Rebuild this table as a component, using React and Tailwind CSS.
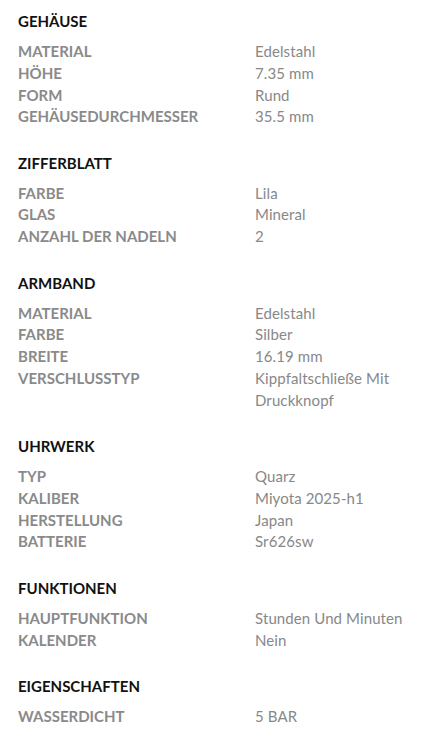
import React from 'react';

// Technische Daten der Uhr
const sections = [
  {
    title: 'GEHÄUSE',
    rows: [
      ['MATERIAL', 'Edelstahl'],
      ['HÖHE', '7.35 mm'],
      ['FORM', 'Rund'],
      ['GEHÄUSEDURCHMESSER', '35.5 mm'],
    ],
  },
  {
    title: 'ZIFFERBLATT',
    rows: [
      ['FARBE', 'Lila'],
      ['GLAS', 'Mineral'],
      ['ANZAHL DER NADELN', '2'],
    ],
  },
  {
    title: 'ARMBAND',
    rows: [
      ['MATERIAL', 'Edelstahl'],
      ['FARBE', 'Silber'],
      ['BREITE', '16.19 mm'],
      ['VERSCHLUSSTYP', 'Kippfaltschließe Mit Druckknopf'],
    ],
  },
  {
    title: 'UHRWERK',
    rows: [
      ['TYP', 'Quarz'],
      ['KALIBER', 'Miyota 2025-h1'],
      ['HERSTELLUNG', 'Japan'],
      ['BATTERIE', 'Sr626sw'],
    ],
  },
  {
    title: 'FUNKTIONEN',
    rows: [
      ['HAUPTFUNKTION', 'Stunden Und Minuten'],
      ['KALENDER', 'Nein'],
    ],
  },
  {
    title: 'EIGENSCHAFTEN',
    rows: [['WASSERDICHT', '5 BAR']],
  },
];

export default function App() {
  return (
    <div className="min-h-screen bg-white px-[18px] pt-[10px] font-['Lato',sans-serif] text-[15px]">
      <div className="flex flex-col gap-[23.7px]">
        {sections.map((s) => (
          <section key={s.title}>
            <h3 className="font-bold leading-[22px] text-[#111]">{s.title}</h3>
            <dl className="mt-[9px]">
              {s.rows.map(([label, value]) => (
                <div key={label} className="flex leading-[21.75px]">
                  <dt className="w-[237px] shrink-0 font-bold text-[#8a8a8a]">{label}</dt>
                  <dd className="min-w-0 flex-1 tracking-[0.1px] text-[#888]">{value}</dd>
                </div>
              ))}
            </dl>
          </section>
        ))}
      </div>
    </div>
  );
}
